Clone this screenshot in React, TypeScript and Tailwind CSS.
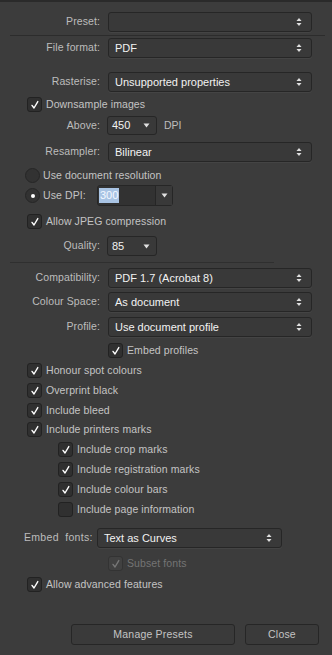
import React from "react";

const FONT = { fontFamily: '"Liberation Sans", Arial, sans-serif' };

function Stepper() {
  return (
    <svg width="6" height="10" viewBox="0 0 6 10" className="shrink-0">
      <path d="M3 1 L5.5 4 L0.5 4 Z" fill="#e0e0e0" />
      <path d="M3 9 L5.5 6 L0.5 6 Z" fill="#e0e0e0" />
    </svg>
  );
}

function Caret() {
  return (
    <svg width="7" height="5" viewBox="0 0 7 5" className="shrink-0">
      <path d="M0.5 0.5 L6.5 0.5 L3.5 4.5 Z" fill="#e0e0e0" />
    </svg>
  );
}

function Select({ value, width = "w-[204px]" }: { value: string; width?: string }) {
  return (
    <div className={`flex h-full ${width} items-center justify-between rounded-[3px] border border-[#262626] bg-[#393939] pl-[6px] pr-[9px] shadow-[0_1px_0_#444]`}>
      <span className="whitespace-nowrap text-[11px] text-[#f2f2f2]">{value}</span>
      <Stepper />
    </div>
  );
}

function SmallDrop({ value }: { value: string }) {
  return (
    <div className="flex h-full w-[50px] items-center justify-between rounded-[3px] border border-[#262626] bg-[#393939] pl-[4px] pr-[6px]">
      <span className="text-[11px] text-[#f2f2f2]">{value}</span>
      <Caret />
    </div>
  );
}

function Label({ children }: { children: React.ReactNode }) {
  return <div className="w-[101px] shrink-0 whitespace-nowrap pr-[1px] text-right text-[10.5px] tracking-[0.1px] text-[#bdbdbd]">{children}</div>;
}

function FieldRow({ label, children, className }: { label: string; children: React.ReactNode; className: string }) {
  return (
    <div className={`flex items-center ${className}`}>
      <Label>{label}</Label>
      <div className="ml-[7px] flex h-full items-center">{children}</div>
    </div>
  );
}

function Check({ label, checked = true, disabled = false, className }: { label: string; checked?: boolean; disabled?: boolean; className: string }) {
  return (
    <div className={`flex h-[15px] items-center ${className}`}>
      <div className={`flex h-[15px] w-[15px] items-center justify-center rounded-[3px] border ${disabled ? "border-[#333] bg-[#414141]" : "border-[#222] bg-[#303030]"}`}>
        {checked && (
          <svg width="10" height="10" viewBox="0 0 10 10">
            <path d="M2 5.4 L4 8 L7.8 1.6" fill="none" stroke={disabled ? "#777" : "#ffffff"} strokeWidth="1.4" strokeLinecap="round" strokeLinejoin="round" />
          </svg>
        )}
      </div>
      <span className={`ml-[4px] whitespace-nowrap text-[10.5px] tracking-[0.1px] ${disabled ? "text-[#747474]" : "text-[#c4c4c4]"}`}>{label}</span>
    </div>
  );
}

function Radio({ selected }: { selected: boolean }) {
  return (
    <div className="flex h-[15px] w-[15px] items-center justify-center rounded-full border border-[#262626] bg-[#323232]">
      {selected && <div className="h-[4px] w-[4px] rounded-full bg-white" />}
    </div>
  );
}

export default function App() {
  return (
    <div className="h-[655px] w-[332px] overflow-hidden border-t-2 border-[#2a2a2a] bg-[#3c3c3c]" style={FONT}>
      <FieldRow label="Preset:" className="mt-[10px] h-[20px]">
        <Select value="" />
      </FieldRow>
      <div className="ml-[10px] mt-[3px] h-px w-[315px] bg-[#2c2c2c]" />
      <FieldRow label="File format:" className="mt-[2px] h-[20px]">
        <Select value="PDF" />
      </FieldRow>
      <FieldRow label="Rasterise:" className="mt-[14px] h-[20px]">
        <Select value="Unsupported properties" />
      </FieldRow>
      <Check label="Downsample images" className="ml-[27px] mt-[5px]" />
      <div className="mt-[4px] flex h-[19px] items-center">
        <Label>Above:</Label>
        <div className="ml-[6px] h-full">
          <SmallDrop value="450" />
        </div>
        <span className="ml-[7px] text-[10.5px] text-[#bdbdbd]">DPI</span>
      </div>
      <FieldRow label="Resampler:" className="mt-[7px] h-[20px]">
        <Select value="Bilinear" />
      </FieldRow>
      <div className="ml-[25px] mt-[6px] flex h-[15px] items-center">
        <Radio selected={false} />
        <span className="ml-[3px] text-[10.5px] tracking-[0.1px] text-[#c4c4c4]">Use document resolution</span>
      </div>
      <div className="ml-[25px] mt-[2px] flex h-[21px] items-center">
        <Radio selected />
        <span className="ml-[3px] w-[54px] text-[10.5px] tracking-[0.1px] text-[#c4c4c4]">Use DPI:</span>
        <div className="flex h-full w-[76px] rounded-[3px] border border-[#262626] bg-[#323232]">
          <div className="flex flex-1 items-center pl-[1px]">
            <span className="bg-[#a9c4e4] px-[1px] text-[11px] leading-[15px] text-[#f4f8ff]">300</span>
          </div>
          <div className="flex w-[17px] items-center justify-center border-l border-[#262626] bg-[#393939]">
            <Caret />
          </div>
        </div>
      </div>
      <Check label="Allow JPEG compression" className="ml-[27px] mt-[8px]" />
      <div className="mt-[7px] flex h-[20px] items-center">
        <Label>Quality:</Label>
        <div className="ml-[6px] h-full">
          <SmallDrop value="85" />
        </div>
      </div>
      <div className="ml-[10px] mt-[6px] h-px w-[264px] bg-[#2f2f2f]" />
      <FieldRow label="Compatibility:" className="mt-[5px] h-[20px]">
        <Select value="PDF 1.7 (Acrobat 8)" />
      </FieldRow>
      <FieldRow label="Colour Space:" className="mt-[4px] h-[20px]">
        <Select value="As document" />
      </FieldRow>
      <FieldRow label="Profile:" className="mt-[5px] h-[20px]">
        <Select value="Use document profile" />
      </FieldRow>
      <Check label="Embed profiles" className="ml-[108px] mt-[6px]" />
      <Check label="Honour spot colours" className="ml-[27px] mt-[5px]" />
      <Check label="Overprint black" className="ml-[27px] mt-[5px]" />
      <Check label="Include bleed" className="ml-[27px] mt-[5px]" />
      <Check label="Include printers marks" className="ml-[27px] mt-[4px]" />
      <Check label="Include crop marks" className="ml-[58px] mt-[5px]" />
      <Check label="Include registration marks" className="ml-[58px] mt-[5px]" />
      <Check label="Include colour bars" className="ml-[58px] mt-[5px]" />
      <Check label="Include page information" checked={false} className="ml-[58px] mt-[5px]" />
      <div className="mt-[11px] flex h-[20px] items-center">
        <span className="ml-[24px] w-[73px] whitespace-nowrap text-[10.5px] tracking-[0.3px] text-[#bdbdbd]">Embed&nbsp; fonts:</span>
        <Select value="Text as Curves" width="w-[185px]" />
      </div>
      <Check label="Subset fonts" disabled className="ml-[108px] mt-[8px]" />
      <Check label="Allow advanced features" className="ml-[27px] mt-[6px]" />
      <div className="mt-[32px] flex h-[21px]">
        <button type="button" className="ml-[71px] h-full w-[164px] rounded-[3px] border border-[#262626] bg-[#3a3a3a] text-[10.5px] tracking-[0.2px] text-[#c4c4c4]">Manage Presets</button>
        <button type="button" className="ml-[10px] h-full w-[74px] rounded-[3px] border border-[#262626] bg-[#3a3a3a] text-[10.5px] tracking-[0.2px] text-[#c4c4c4]">Close</button>
      </div>
    </div>
  );
}
